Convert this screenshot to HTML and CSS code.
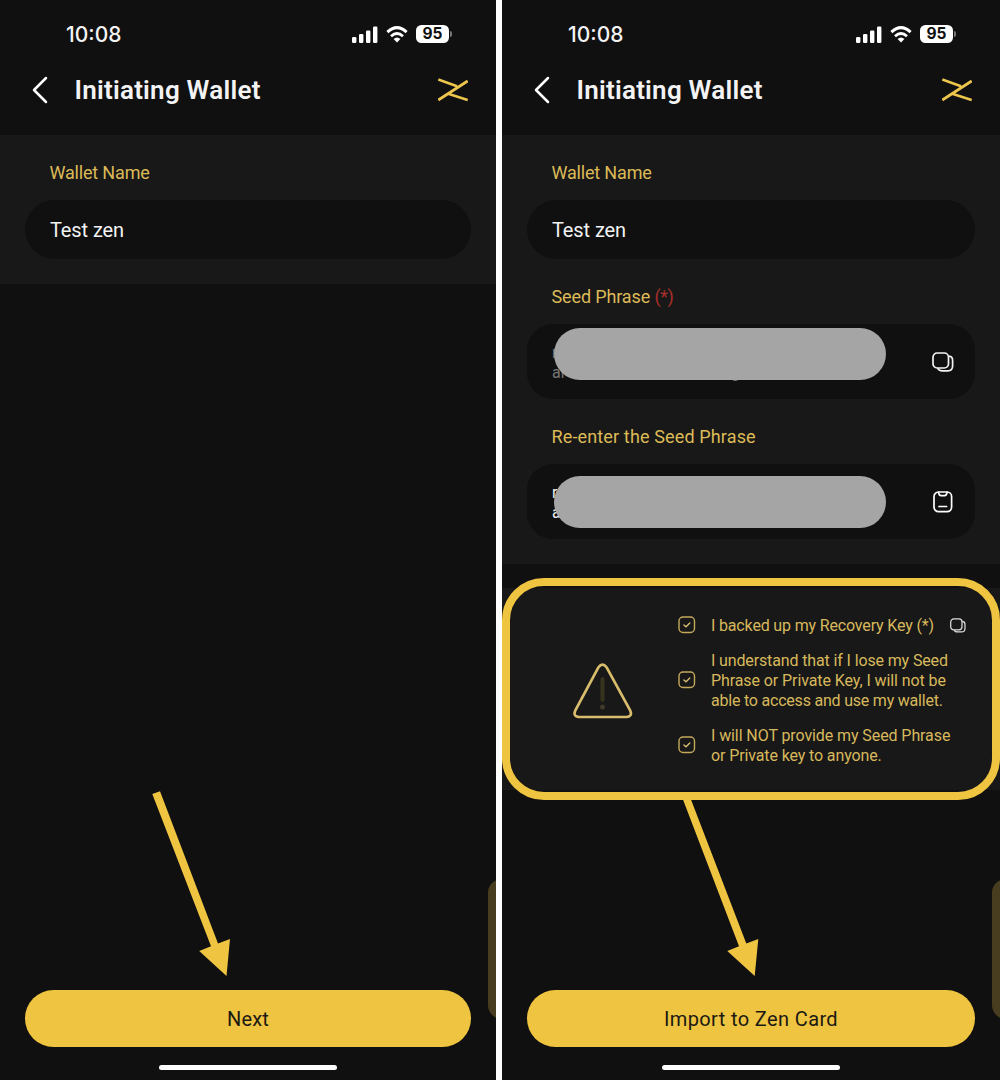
FILE: index.html
```html
<!DOCTYPE html>
<html lang="en">
<head>
<meta charset="utf-8">
<title>Initiating Wallet</title>
<link rel="stylesheet" href="styles.css">
</head>
<body>
<svg width="0" height="0" class="defs" aria-hidden="true">
  <symbol id="signal" viewBox="0 0 26 17"><rect x="0" y="11" width="4.4" height="6" rx="1.2"/><rect x="7" y="8" width="4.4" height="9" rx="1.2"/><rect x="14" y="4.500" width="4.400" height="12.500" rx="1.2"/><rect x="21" y="0.500" width="4.400" height="16.500" rx="1.2"/></symbol>
  <symbol id="wifi" viewBox="0 0 22 17"><path d="M1.400 6.200Q11-2.800 20.600 6.200" fill="none" stroke="#fff" stroke-width="3"/><path d="M5 10.200Q11 4.800 17 10.200" fill="none" stroke="#fff" stroke-width="2.800"/><path d="M7.600 13Q11 10 14.400 13L11 16.600Z"/></symbol>
  <symbol id="back" viewBox="0 0 16 28"><path d="M14 2L2 14L14 26" fill="none" stroke="#fff" stroke-width="2.500" stroke-linecap="round" stroke-linejoin="round"/></symbol>
  <symbol id="logo" viewBox="0 0 30 24"><path d="M.3 1.500L19 8.300M.3 22L29.700 3M11 16L29.700 22" fill="none" stroke="#ecc54c" stroke-width="2.700"/></symbol>
  <symbol id="copy" viewBox="0 0 22 20"><rect x="1" y="1" width="15.500" height="15" rx="4.200" fill="none" stroke="currentColor" stroke-width="1.700"/><path d="M17 4.200Q20.600 4.600 20.600 8.500V14Q20.600 18.800 15.800 18.800H10.500Q6.500 18.800 5.800 16.300" fill="none" stroke="currentColor" stroke-width="1.700"/></symbol>
  <symbol id="paste" viewBox="0 0 20 22"><rect x="1" y="1" width="17.600" height="19.600" rx="4.500" fill="none" stroke="#fff" stroke-width="1.700"/><path d="M5.500 1.300Q6 4.700 8 4.700H11.600Q13.600 4.700 14.100 1.300M6 15.500H13.600" fill="none" stroke="#fff" stroke-width="1.700" stroke-linecap="round"/></symbol>
  <symbol id="check" viewBox="0 0 18 18"><rect x="1" y="1" width="15.500" height="15.500" rx="4" fill="none" stroke="#c4a85a" stroke-width="1.400"/><path d="M5.900 8.900L8 10.800L11.800 7" fill="none" stroke="#d6bd73" stroke-width="1.300" stroke-linecap="round"/></symbol>
</svg>
<main class="screens">
  <section class="phone">
    <div class="status">
      <span class="time">10:08</span>
      <svg class="signal"><use href="#signal"/></svg>
      <svg class="wifi"><use href="#wifi"/></svg>
      <span class="battery">95</span><i class="battery-tip"></i>
    </div>
    <header class="nav">
      <svg class="back"><use href="#back"/></svg>
      <h1 class="title">Initiating Wallet</h1>
      <svg class="logo"><use href="#logo"/></svg>
    </header>
    <div class="form">
      <div class="label"><span class="label-wallet">Wallet Name</span></div>
      <div class="field"><span class="value">Test zen</span></div>
    </div>
    <div class="footer">
      <button class="button next">Next</button>
      <i class="home"></i>
    </div>
    <i class="side-tab"></i>
  </section>
  <section class="phone">
    <div class="status">
      <span class="time">10:08</span>
      <svg class="signal"><use href="#signal"/></svg>
      <svg class="wifi"><use href="#wifi"/></svg>
      <span class="battery">95</span><i class="battery-tip"></i>
    </div>
    <header class="nav">
      <svg class="back"><use href="#back"/></svg>
      <h1 class="title">Initiating Wallet</h1>
      <svg class="logo"><use href="#logo"/></svg>
    </header>
    <div class="form">
      <div class="label"><span class="label-wallet">Wallet Name</span></div>
      <div class="field"><span class="value">Test zen</span></div>
      <div class="label"><span class="label-seed">Seed Phrase</span> <span class="required">(*)</span></div>
      <div class="field area">
        <div class="phrase muted"><span>r</span><span class="line"><span class="word">ar</span><span>g</span></span></div>
        <i class="mask mask-seed"></i>
        <svg class="copy"><use href="#copy"/></svg>
      </div>
      <div class="label"><span class="label-reenter">Re-enter the Seed Phrase</span></div>
      <div class="field area">
        <div class="phrase"><span>r</span><span>a</span></div>
        <i class="mask mask-reenter"></i>
        <svg class="paste"><use href="#paste"/></svg>
      </div>
    </div>
    <div class="notice">
      <svg class="warning" viewBox="0 0 60 56"><path d="M25.500 4.200Q29.500-1 33.500 4.200L57 47Q60 53.500 53.500 54H6Q-.5 53.500 2.500 47Z" fill="none" stroke="#d8bd6c" stroke-width="2.700"/><path d="M29.500 16V37" stroke="#38331f" stroke-width="4" stroke-linecap="round"/><circle cx="29.500" cy="44" r="2.500" fill="#403b28"/></svg>
      <div class="checks">
        <div class="check"><svg class="box"><use href="#check"/></svg><p><span class="c1">I backed up my Recovery Key (*)</span></p><svg class="copy-small"><use href="#copy"/></svg></div>
        <div class="check"><svg class="box"><use href="#check"/></svg><p><span class="c2">I understand that if I lose my Seed</span><br><span class="c3">Phrase or Private Key, I will not be</span><br><span class="c4">able to access and use my wallet.</span></p></div>
        <div class="check"><svg class="box"><use href="#check"/></svg><p><span class="c5">I will NOT provide my Seed Phrase</span><br><span class="c6">or Private key to anyone.</span></p></div>
      </div>
    </div>
    <div class="footer">
      <button class="button import">Import to Zen Card</button>
      <i class="home"></i>
    </div>
    <i class="side-tab"></i>
    <i class="highlight"></i>
  </section>
  <svg class="arrows" viewBox="0 0 1002 1080" fill="#efc440"><path d="M152.300 794L160 791.300L218 943.400L230 939L226.500 976L199.200 951L211 946.300Z"/><path d="M682 797L690 797L746.300 943.400L758.300 939L754.700 976L727.300 951L739 946.300Z"/></svg>
</main>
</body>
</html>
```
FILE: styles.css
```css
* { box-sizing: border-box; }
body { margin: 0; background: #fff; font-family: Roboto, "Noto Sans", sans-serif; }
.defs { position: absolute; }
.screens { position: relative; display: grid; grid-template-columns: 496px 498px; column-gap: 6px; height: 1080px; overflow: hidden; }
.phone { position: relative; display: flex; flex-direction: column; height: 1080px; background: #101010; color: #f3f3f3; overflow: hidden; }
svg { display: block; flex: none; }

.status { display: flex; align-items: center; height: 68px; padding: 0 44px 0 66px; fill: #fff; }
.time { flex: 1; padding-top: 1px; font: 500 21px/24px Inter, sans-serif; }
.signal { width: 26px; height: 17px; }
.wifi { width: 22px; height: 17px; margin: 0 8px 0 8px; }
.battery { width: 33px; height: 18px; border-radius: 5.500px; background: #fff; color: #101010; font: 700 15.500px/18px Inter, sans-serif; text-align: center; }
.battery-tip { width: 2px; height: 6px; margin-left: 1px; border-radius: 0 2px 2px 0; background: #777; }

.nav { display: flex; align-items: center; height: 67px; padding: 0 28px 23px 32px; }
.back { width: 16px; height: 28px; }
.title { flex: 1; margin: 0 0 0 26.500px; font-size: 26px; font-weight: 600; line-height: 30px; letter-spacing: 0.24px; }
.logo { width: 30px; height: 24px; }

.form { display: flex; flex-direction: column; padding: 25px 25px; background: #181818; }
.label { height: 24px; margin: 0 0 16px 24.500px; color: #dcba57; font-size: 18px; line-height: 25px; white-space: nowrap; }
.label-wallet { letter-spacing: -0.18px; }
.label-seed { letter-spacing: -0.13px; }
.label-reenter { letter-spacing: 0.14px; }
.field + .label { margin-top: 25px; }
.required { color: #a92f2b; letter-spacing: -0.5px; }
.field { position: relative; display: flex; align-items: center; height: 59px; padding: 0 21px 0 25px; border-radius: 30px; background: #101010; }
.value { font-size: 20px; letter-spacing: -0.1px; }
.area { height: 75px; border-radius: 26px; }
.phrase { display: flex; flex: 1; flex-direction: column; padding-top: 3px; font-size: 16px; line-height: 20px; }
.line { display: flex; }
.word { width: 179px; }
.muted { color: #777; }
.mask { position: absolute; left: 27px; width: 332px; height: 52px; border-radius: 26px; background: #a5a5a5; }
.mask-seed { top: 4px; }
.mask-reenter { top: 12px; }
.copy { width: 22px; height: 20px; }
.paste { width: 20px; height: 22px; margin-right: 1px; }

.notice { display: flex; height: 202px; margin-top: 24px; padding: 27px 34px 0 70.500px; background: #181818; }
.warning { width: 60px; height: 56px; margin-top: 48px; }
.checks { display: flex; flex: 1; flex-direction: column; gap: 15px; margin-left: 45px; }
.check { display: flex; align-items: center; color: #d7b85c; font-size: 16px; line-height: 20px; }
.check p { flex: 1; margin: 0 0 0 15.500px; padding-top: 1px; margin-bottom: -1px; white-space: nowrap; }
.c1 { letter-spacing: -0.16px; }
.c2 { letter-spacing: -0.13px; }
.c3 { letter-spacing: -0.09px; }
.c4 { letter-spacing: -0.21px; }
.c5 { letter-spacing: -0.09px; }
.c6 { letter-spacing: -0.12px; }
.box { width: 18px; height: 18px; }
.copy-small { width: 16px; height: 15px; color: #ddd; }

.footer { display: flex; flex-direction: column; align-items: center; gap: 18px; margin-top: auto; padding: 0 25px 10px; }
.button { width: 100%; height: 57px; padding: 2px 0 0; border: 0; border-radius: 29px; background: #efc440; color: #1b1913; font: 400 20px/55px Roboto, sans-serif; }
.next { letter-spacing: 0.2px; }
.import { letter-spacing: 0.38px; }
.home { width: 178px; height: 5px; border-radius: 3px; background: #fff; }
.side-tab { position: absolute; top: 879px; right: -20px; width: 28px; height: 140px; border-radius: 16px; background: #493d1f; }
.highlight { position: absolute; top: 578px; left: 0; width: 498px; height: 222px; border: 8px solid #efc440; border-radius: 42px; }
.arrows { position: absolute; top: 0; left: 0; width: 1002px; height: 1080px; pointer-events: none; }
```
